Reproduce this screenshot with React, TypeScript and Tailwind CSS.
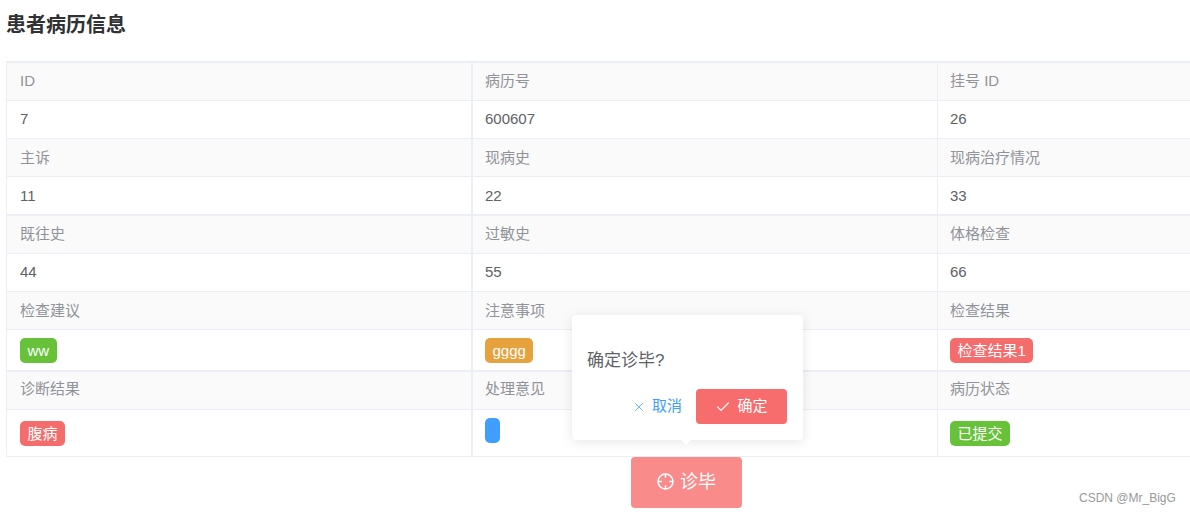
import React from "react";
import { Check, X } from "lucide-react";

type Cell = { label: string; value?: string; tag?: { text: string; color: string } };

const GREEN = "bg-[#67c23a]";
const ORANGE = "bg-[#e6a23c]";
const RED = "bg-[#f56c6c]";
const BLUE = "bg-[#409eff]";

// Each block: a label row and a value row, with heights read from the picture.
const blocks: { labelH: string; valueH: string; labelPad?: string; valuePad?: string; cells: Cell[] }[] = [
  {
    labelH: "h-[39px] border-t-2",
    valueH: "h-[38px] border-t",
    cells: [
      { label: "ID", value: "7" },
      { label: "病历号", value: "600607" },
      { label: "挂号 ID", value: "26" },
    ],
  },
  {
    labelH: "h-[38px] border-t",
    valueH: "h-[38px] border-t",
    labelPad: "pt-[2px]",
    valuePad: "pt-[2px]",
    cells: [
      { label: "主诉", value: "11" },
      { label: "现病史", value: "22" },
      { label: "现病治疗情况", value: "33" },
    ],
  },
  {
    labelH: "h-[39px] border-t-2",
    valueH: "h-[38px] border-t",
    cells: [
      { label: "既往史", value: "44" },
      { label: "过敏史", value: "55" },
      { label: "体格检查", value: "66" },
    ],
  },
  {
    labelH: "h-[38px] border-t",
    valueH: "h-[41px] border-t",
    labelPad: "pt-[2px]",
    cells: [
      { label: "检查建议", tag: { text: "ww", color: GREEN } },
      { label: "注意事项", tag: { text: "gggg", color: ORANGE } },
      { label: "检查结果", tag: { text: "检查结果1", color: RED } },
    ],
  },
  {
    labelH: "h-[39px] border-t-2",
    valueH: "h-[48px] border-y",
    labelPad: "pb-[2px]",
    cells: [
      { label: "诊断结果", tag: { text: "腹病", color: RED } },
      { label: "处理意见", tag: { text: "", color: BLUE } },
      { label: "病历状态", tag: { text: "已提交", color: GREEN } },
    ],
  },
];

const colBorders = ["border-l pl-[13px]", "border-l-2 pl-[12px]", "border-l pl-[12px]"];

const Tag = ({ text, color }: { text: string; color: string }) => (
  <span
    className={`${color} ${text ? "" : "mb-[6px]"} inline-flex h-[25px] min-w-[15px] items-center rounded-[5px] px-[7.5px] text-[15px] leading-none text-white`}
  >
    {text}
  </span>
);

// Target ring with four inward ticks, same as the element-ui aim icon
const AimIcon = () => (
  <svg className="mb-[2px]" width="17" height="17" viewBox="0 0 17 17" fill="none" stroke="currentColor" strokeWidth="1.5">
    <circle cx="8.5" cy="8.5" r="7.5" />
    <path d="M8.5 1v3.8M8.5 12.2V16M1 8.5h3.8M12.2 8.5H16" />
  </svg>
);

export default function App() {
  return (
    <div
      className="relative h-[515px] w-[1190px] overflow-hidden bg-white"
      style={{ fontFamily: '"Liberation Sans", "Noto Sans CJK SC", sans-serif' }}
    >
      {/* Title */}
      <div className="h-[61px] pl-[6px] pt-[12px] text-[20px] font-bold leading-[26px] text-[#303133]">
        患者病历信息
      </div>

      {/* Description table, runs off the right edge */}
      <div className="ml-[6px] w-[1398px] text-[15px]">
        {blocks.map((block) => (
          <React.Fragment key={block.cells[0].label}>
            <div className={`grid grid-cols-[465px_466px_467px] border-[#ebeef5] bg-[#fafafa] text-[#909399] ${block.labelH}`}>
              {block.cells.map((cell, i) => (
                <div key={cell.label} className={`flex items-center border-[#ebeef5] ${colBorders[i]} ${block.labelPad ?? ""}`}>
                  {cell.label}
                </div>
              ))}
            </div>
            <div className={`grid grid-cols-[465px_466px_467px] border-[#ebeef5] text-[#606266] ${block.valueH}`}>
              {block.cells.map((cell, i) => (
                <div key={cell.label} className={`flex items-center border-[#ebeef5] ${colBorders[i]} ${block.valuePad ?? ""}`}>
                  {cell.tag ? <Tag {...cell.tag} /> : cell.value}
                </div>
              ))}
            </div>
          </React.Fragment>
        ))}
      </div>

      {/* Action button with its confirm popover */}
      <div className="pl-[631px]">
        <div className="relative w-[111px]">
          <button className="flex h-[51px] w-[111px] items-center justify-center gap-[6px] rounded-[4px] bg-[#f98b8b] text-[18px] text-white">
            <AimIcon />
            诊毕
          </button>

          <div className="absolute bottom-[68px] left-[-59px] h-[125px] w-[231px] rounded-[4px] bg-white pl-[15px] pr-[16px] pt-[35px] shadow-[0_2px_12px_0_rgba(0,0,0,0.1)]">
            <p className="text-[17px] leading-[22px] text-[#606266]">确定诊毕?</p>
            <div className="mt-[17px] flex items-center justify-end">
              <button className="mr-[14px] flex items-center gap-[6px] text-[15px] text-[#409eff]">
                <X size={14} strokeWidth={1.3} />
                取消
              </button>
              <button className="flex h-[35px] w-[91px] items-center justify-center gap-[6px] rounded-[4px] bg-[#f76c6c] text-[15px] text-white">
                <Check size={16} strokeWidth={1.8} />
                确定
              </button>
            </div>
            <div className="absolute bottom-[-5px] left-[108px] h-0 w-0 border-x-[6px] border-t-[6px] border-x-transparent border-t-white" />
          </div>
        </div>
      </div>

      {/* Watermark */}
      <div className="absolute left-[1079px] top-[491px] text-[12px] leading-[14px] text-[#999999]">CSDN @Mr_BigG</div>
    </div>
  );
}
